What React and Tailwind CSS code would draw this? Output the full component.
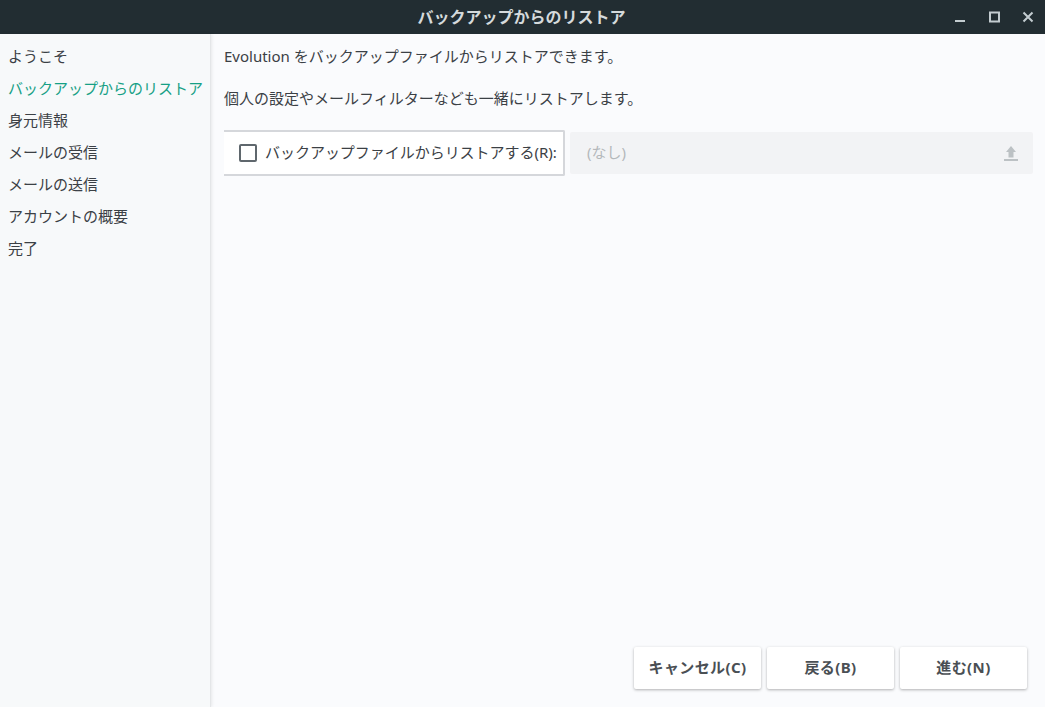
export default function App() {
  const font = { fontFamily: '"Noto Sans", "Noto Sans CJK JP", sans-serif' };
  const steps = ["ようこそ", "バックアップからのリストア", "身元情報", "メールの受信", "メールの送信", "アカウントの概要", "完了"];
  return (
    <div style={font} className="w-[1045px] h-[707px] flex flex-col overflow-hidden bg-[#fafbfd] text-[15px] text-[#3b4045]">
      <div className="h-[34px] shrink-0 bg-[#222d32] relative flex items-center justify-center font-bold text-[16px] leading-none">
        <span className="text-[#d5dadc] -ml-[2px]">バックアップからのリストア</span>
        <div className="absolute right-0 top-0 h-[34px] flex items-center">
          <svg width="120" height="34" viewBox="0 0 120 34" className="block">
            <rect x="30" y="20" width="10" height="2" fill="#c3ccd0" />
            <rect x="65" y="12.5" width="9" height="9" fill="none" stroke="#c3ccd0" strokeWidth="2" />
            <path d="M98.5 12.5 L107.5 21.5 M107.5 12.5 L98.5 21.5" stroke="#c3ccd0" strokeWidth="2" fill="none" />
          </svg>
        </div>
      </div>
      <div className="flex-1 flex min-h-0">
        <div className="w-[211px] shrink-0 bg-[#f7f9fa] border-r border-[#e4e6e8] shadow-[1px_0_3px_rgba(0,0,0,0.08)] pt-[6px] pl-[8px] flex flex-col z-10">
          {steps.map((s, i) => (
            <div key={s} className={`h-[32px] flex items-center whitespace-nowrap ${i === 1 ? "text-[#16a085]" : ""}`}>{s}</div>
          ))}
        </div>
        <div className="flex-1 flex flex-col min-w-0 pl-[13px] pr-[12px]">
          <div className="h-[21px] mt-[12px] flex items-center whitespace-nowrap">Evolution をバックアップファイルからリストアできます。</div>
          <div className="h-[21px] mt-[21px] flex items-center whitespace-nowrap">個人の設定やメールフィルターなども一緒にリストアします。</div>
          <div className="flex mt-[21px] h-[46px] items-center">
            <div className="w-[341px] h-[46px] bg-white border-y-2 border-r-2 border-[#d5d7db] rounded-r-[2px] flex items-center pl-[15px] shrink-0">
              <span className="w-[18px] h-[18px] border-2 border-[#5f676d] rounded-[2px] shrink-0" />
              <span className="ml-[8px] pb-[2px] whitespace-nowrap text-[#3b4045] -tracking-[0.03px]">バックアップファイルからリストアする(R):</span>
            </div>
            <div className="ml-[5px] flex-1 h-[42px] bg-[#f2f3f5] rounded-[2px] flex items-center justify-between pl-[17px] pr-[14px] text-[#b4b8bb]">
              <span className="pb-[2px]">(なし)</span>
              <svg width="16" height="16" viewBox="0 0 16 16" className="block">
                <path d="M8 1 L13 7 L10.5 7 L10.5 12.5 L5.5 12.5 L5.5 7 L3 7 Z" fill="#bcc1c4" />
                <rect x="1" y="14" width="14" height="2" fill="#bcc1c4" />
              </svg>
            </div>
          </div>
          <div className="flex-1" />
          <div className="flex justify-end gap-[6px] pb-[18px] pr-[6px]">
            {["キャンセル(C)", "戻る(B)", "進む(N)"].map((t) => (
              <button key={t} className="w-[127px] h-[42px] pb-[1px] bg-white rounded-[2px] shadow-[0_1px_3px_rgba(0,0,0,0.3)] font-bold text-[15px] leading-none tracking-[0.4px] text-[#4a4f54] whitespace-nowrap">{t}</button>
            ))}
          </div>
        </div>
      </div>
    </div>
  );
}
